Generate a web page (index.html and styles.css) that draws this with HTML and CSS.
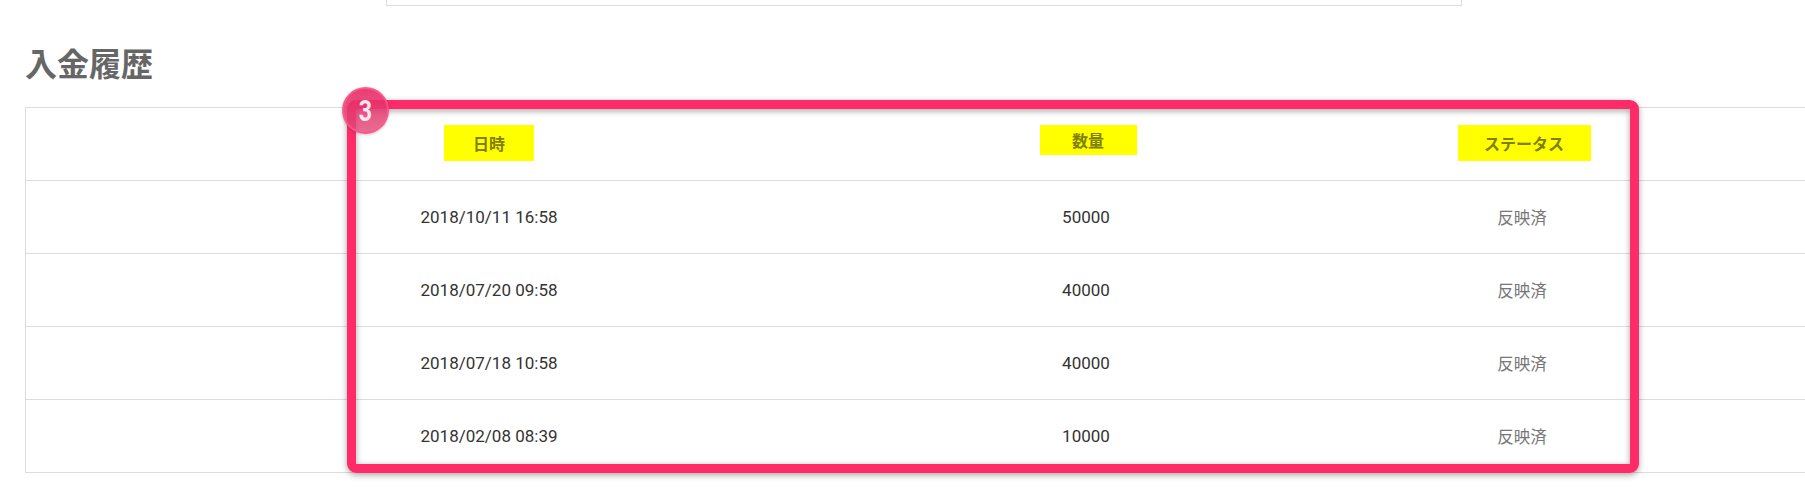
FILE: index.html
```html
<!DOCTYPE html>
<html lang="ja">
<head>
<meta charset="utf-8">
<title>入金履歴</title>
<link rel="stylesheet" href="styles.css">
</head>
<body>
<div class="page">
  <div class="topbox"></div>
  <h2 class="heading">入金履歴</h2>
  <div class="table-wrap">
    <div class="table">
      <div class="row head">
        <div class="cell"><span class="hl hl-date">日時</span></div>
        <div class="cell"><span class="hl hl-qty">数量</span></div>
        <div class="cell"><span class="hl hl-status">ステータス</span></div>
      </div>
      <div class="row">
        <div class="cell date">2018/10/11 16:58</div>
        <div class="cell qty">50000</div>
        <div class="cell status">反映済</div>
      </div>
      <div class="row">
        <div class="cell date">2018/07/20 09:58</div>
        <div class="cell qty">40000</div>
        <div class="cell status">反映済</div>
      </div>
      <div class="row">
        <div class="cell date">2018/07/18 10:58</div>
        <div class="cell qty">40000</div>
        <div class="cell status">反映済</div>
      </div>
      <div class="row">
        <div class="cell date">2018/02/08 08:39</div>
        <div class="cell qty">10000</div>
        <div class="cell status">反映済</div>
      </div>
    </div>
  </div>
  <div class="annot"></div>
  <div class="badge"><span>3</span></div>
</div>
</body>
</html>
```
FILE: styles.css
```css
html, body {
  margin: 0;
  padding: 0;
  background: #fff;
}
body {
  font-family: Roboto, "Noto Sans CJK JP", sans-serif;
  color: #333;
  overflow: hidden;
}
.page {
  position: relative;
  width: 1805px;
  height: 497px;
  overflow: hidden;
}
.topbox {
  margin-left: 386px;
  width: 1076px;
  height: 6px;
  box-sizing: border-box;
  border: 1px solid #dcdcdc;
  border-top: none;
}
.heading {
  margin: 40px 0 0 0;
  padding-left: 25px;
  font-family: "Noto Sans CJK JP", sans-serif;
  font-size: 32px;
  line-height: 32px;
  font-weight: 700;
  color: #666;
  height: 32px;
}
.table-wrap {
  margin-top: 29px;
  margin-left: 25px;
  overflow: hidden;
}
.table {
  width: 1798px;
  border-top: 1px solid #dcdcdc;
  border-left: 1px solid #dcdcdc;
}
.row {
  display: grid;
  grid-template-columns: 926px 268px 604px;
  height: 72px;
  border-bottom: 1px solid #dcdcdc;
}
.cell {
  display: flex;
  align-items: center;
  justify-content: center;
  font-size: 17px;
}
.date, .qty {
  color: #333;
}
.status {
  color: #777;
  font-family: "Noto Sans CJK JP", sans-serif;
  font-size: 16.5px;
}
.hl {
  background: #ffff00;
  color: #808000;
  font-family: "Noto Sans CJK JP", sans-serif;
  font-weight: 700;
  font-size: 16px;
  display: inline-flex;
  align-items: center;
  justify-content: center;
  height: 36px;
  margin-top: -2px;
}
.hl-date {
  width: 90px;
}
.hl-qty {
  width: 97px;
  height: 30px;
  margin-top: -8px;
  margin-left: 4px;
}
.hl-status {
  width: 133px;
  margin-left: 4px;
}
.annot {
  position: absolute;
  left: 347px;
  top: 100px;
  width: 1292px;
  height: 373px;
  box-sizing: border-box;
  border: 9px solid #ff2a68;
  border-radius: 9px;
  box-shadow: 0 2px 6px rgba(0, 0, 0, 0.35), inset 0 2px 6px rgba(0, 0, 0, 0.35);
}
.badge {
  position: absolute;
  left: 342px;
  top: 87px;
  width: 47px;
  height: 47px;
  box-sizing: border-box;
  border-radius: 50%;
  border: 2px solid rgba(255, 90, 140, 0.8);
  background: linear-gradient(180deg, rgba(232, 40, 100, 0.9) 0%, rgba(224, 76, 124, 0.82) 100%);
  display: flex;
  align-items: center;
  justify-content: center;
  box-shadow: 0 1px 3px rgba(0, 0, 0, 0.2);
}
.badge span {
  color: #fde6ee;
  font-family: Roboto, sans-serif;
  font-weight: 700;
  font-size: 29px;
  line-height: 1;
  transform: scaleX(0.8);
  margin-top: 1px;
}
```
